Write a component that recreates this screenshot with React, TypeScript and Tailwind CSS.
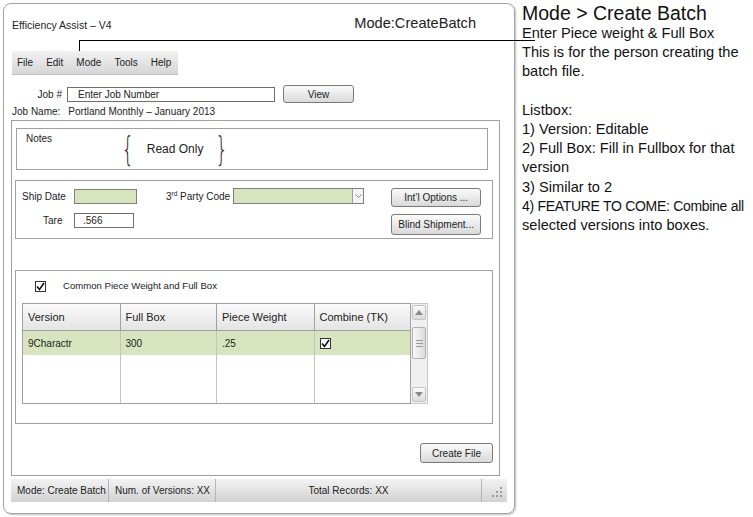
import React from "react";

const font = { fontFamily: '"Liberation Sans", Arial, sans-serif' };

const Btn = ({ label, className = "" }: { label: string; className?: string }) => (
  <div
    className={`flex items-center justify-center rounded-[3px] border border-[#7a7a7a] bg-gradient-to-b from-[#fbfbfb] to-[#d9d9d9] text-[10px] text-[#222] ${className}`}
  >
    {label}
  </div>
);

const Check = () => (
  <div className="flex h-[11px] w-[11px] items-center justify-center border border-[#333] bg-white">
    <svg width="9" height="9" viewBox="0 0 9 9">
      <path d="M1 4.5 L3.5 7.5 L8 1" fill="none" stroke="#111" strokeWidth="1.6" />
    </svg>
  </div>
);

const cols = [
  { name: "Version", w: "w-[98px]" },
  { name: "Full Box", w: "w-[97px]" },
  { name: "Piece Weight", w: "w-[98px]" },
  { name: "Combine (TK)", w: "w-[96px]" },
];

const Brace = ({ ch }: { ch: string }) => (
  <span
    className="inline-block scale-x-[0.6] text-[34px] font-extralight leading-none text-[#333]"
    style={{ fontFamily: '"DejaVu Sans", sans-serif' }}
  >
    {ch}
  </span>
);

const App = () => {
  return (
    <div className="relative h-[517px] w-[753px] overflow-hidden bg-white text-[#222]" style={font}>
      {/* annotation line */}
      <div className="absolute left-[79px] top-[40px] h-[11px] w-px bg-black" />
      <div className="absolute left-[79px] top-[40px] h-px w-[456px] bg-black" />

      <div className="flex">
        {/* window */}
        <div className="ml-[3px] mt-[3px] flex h-[511px] w-[512px] shrink-0 flex-col rounded-[8px] border border-[#a3a3a3] shadow-[1px_1px_2px_rgba(0,0,0,0.25)]">
          <div className="mt-[14px] flex h-[16px] items-center justify-between pl-[8px] pr-[38px]">
            <span className="text-[10.5px]">Efficiency Assist – V4</span>
            <span className="mt-[-4px] text-[14.6px]">Mode:CreateBatch</span>
          </div>

          {/* menu */}
          <div className="ml-[8px] mt-[17px] flex h-[24px] w-[166px] items-center gap-[12px] border-b border-[#bdbdbd] bg-gradient-to-b from-[#f2f2f2] to-[#d6d6d6] pl-[5px] text-[10px]">
            <span>File</span>
            <span className="ml-[1px]">Edit</span>
            <span className="ml-[1px]">Mode</span>
            <span className="ml-[1px]">Tools</span>
            <span className="ml-[1px]">Help</span>
          </div>

          {/* job # */}
          <div className="mt-[10px] flex h-[18px] items-center text-[10px]">
            <span className="w-[58px] text-right">Job #</span>
            <div className="ml-[5px] flex h-[15px] w-[208px] items-center border border-[#6f6f6f] pl-[10px]">
              Enter Job Number
            </div>
            <Btn label="View" className="ml-[8px] h-[18px] w-[71px]" />
          </div>
          <div className="ml-[8px] mt-[1px] flex h-[14px] items-center text-[10px]">
            <span>Job Name:</span>
            <span className="ml-[8px]">Portland Monthly – January 2013</span>
          </div>

          {/* main panel */}
          <div className="ml-[7px] mt-[2px] flex h-[356px] w-[489px] flex-col border border-[#a0a0a0] text-[10px]">
            {/* notes */}
            <div className="ml-[4px] mt-[7px] flex h-[42px] w-[472px] border border-[#a0a0a0]">
              <span className="ml-[9px] mt-[2px]">Notes</span>
              <div className="ml-[65px] flex items-center">
                <Brace ch="{" />
                <span className="ml-[8px] text-[12px]">Read Only</span>
                <span className="ml-[8px]">
                  <Brace ch="}" />
                </span>
              </div>
            </div>

            {/* ship group */}
            <div className="ml-[3px] mt-[10px] flex h-[59px] w-[478px] border border-[#a0a0a0]">
              <div className="mt-[7px] flex flex-col gap-[8px]">
                <div className="flex h-[16px] items-center">
                  <span className="ml-[6px] w-[52px]">Ship Date</span>
                  <div className="h-[15px] w-[63px] border border-[#7f7f7f] bg-[#d7e4bd]" />
                </div>
                <div className="flex h-[16px] items-center">
                  <span className="ml-[27px] w-[31px]">Tare</span>
                  <div className="flex h-[15px] w-[60px] items-center border border-[#6f6f6f] pl-[8px]">.566</div>
                </div>
              </div>
              <div className="ml-[29px] mt-[7px] flex h-[16px] items-center">
                <span>
                  3<sup className="text-[6.5px]">rd</sup> Party Code
                </span>
                <div className="ml-[3px] flex h-[16px] w-[131px] border border-[#7f7f7f] bg-[#d7e4bd]">
                  <div className="ml-auto flex w-[11px] items-center justify-center border-l border-[#a0a0a0] bg-[#f4f4f4]">
                    <svg width="7" height="4" viewBox="0 0 7 4">
                      <path d="M0.5 0.5 L3.5 3.5 L6.5 0.5" fill="none" stroke="#888" />
                    </svg>
                  </div>
                </div>
              </div>
              <div className="ml-[27px] mt-[7px] flex flex-col gap-[7px]">
                <Btn label="Int’l Options ..." className="h-[19px] w-[90px]" />
                <Btn label="Blind Shipment..." className="h-[21px] w-[90px]" />
              </div>
            </div>

            {/* table group */}
            <div className="ml-[3px] mt-[31px] flex h-[154px] w-[478px] flex-col border border-[#a0a0a0]">
              <div className="ml-[19px] mt-[9px] flex h-[12px] items-center">
                <Check />
                <span className="ml-[17px] text-[9.6px]">Common Piece Weight and Full Box</span>
              </div>
              <div className="ml-[6px] mt-[11px] flex">
                <div className="flex h-[101px] w-[389px] flex-col border border-[#a0a0a0]">
                  <div className="flex h-[27px] border-b border-[#a0a0a0] bg-gradient-to-b from-[#fafafa] to-[#e4e4e4] text-[11px]">
                    {cols.map((c, i) => (
                      <div
                        key={c.name}
                        className={`flex items-center pl-[5px] ${c.w} ${i < 3 ? "border-r border-[#a0a0a0]" : ""}`}
                      >
                        {c.name}
                      </div>
                    ))}
                  </div>
                  <div className="flex h-[24px] bg-[#d7e4bd]">
                    {["9Charactr", "300", ".25", ""].map((v, i) => (
                      <div
                        key={i}
                        className={`flex items-center pl-[5px] ${cols[i].w} ${i < 3 ? "border-r border-[#c4c4c4]" : ""}`}
                      >
                        {i === 3 ? <Check /> : v}
                      </div>
                    ))}
                  </div>
                  <div className="flex flex-1">
                    {cols.map((c, i) => (
                      <div key={c.name} className={`${c.w} ${i < 3 ? "border-r border-[#c4c4c4]" : ""}`} />
                    ))}
                  </div>
                </div>
                <div className="flex h-[101px] w-[17px] flex-col border-y border-r border-[#c8c8c8] bg-[#f0f0f0] p-[1px]">
                  <div className="flex h-[15px] items-center justify-center rounded-[2px] border border-[#c4c4c4] bg-gradient-to-b from-[#fafafa] to-[#dcdcdc]">
                    <svg width="8" height="5" viewBox="0 0 8 5">
                      <path d="M0 5 L4 0 L8 5 Z" fill="#8a8a8a" />
                    </svg>
                  </div>
                  <div className="mt-[7px] flex h-[32px] flex-col items-center justify-center gap-[2px] rounded-[2px] border border-[#b0b0b0] bg-gradient-to-r from-[#f8f8f8] to-[#dcdcdc]">
                    <div className="h-px w-[7px] bg-[#9a9a9a]" />
                    <div className="h-px w-[7px] bg-[#9a9a9a]" />
                    <div className="h-px w-[7px] bg-[#9a9a9a]" />
                  </div>
                  <div className="mt-auto flex h-[15px] items-center justify-center rounded-[2px] border border-[#c4c4c4] bg-gradient-to-b from-[#fafafa] to-[#dcdcdc]">
                    <svg width="8" height="5" viewBox="0 0 8 5">
                      <path d="M0 0 L4 5 L8 0 Z" fill="#8a8a8a" />
                    </svg>
                  </div>
                </div>
              </div>
            </div>

            <div className="mr-[6px] mt-[19px] flex justify-end">
              <Btn label="Create File" className="h-[20px] w-[73px]" />
            </div>
          </div>

          {/* status bar */}
          <div className="ml-[7px] mt-[3px] flex h-[23px] w-[496px] bg-gradient-to-b from-[#f3f3f3] to-[#d2d2d2] text-[10px]">
            <div className="flex w-[98px] items-center border-r border-[#b5b5b5] pl-[6px]">Mode: Create Batch</div>
            <div className="flex w-[107px] items-center border-r border-[#b5b5b5] pl-[6px]">Num. of Versions: XX</div>
            <div className="flex flex-1 items-center justify-center border-r border-[#b5b5b5]">Total Records: XX</div>
            <div className="flex w-[25px] items-end justify-end pb-[4px] pr-[4px]">
              <svg width="12" height="12" viewBox="0 0 12 12">
                {[
                  [10, 2],
                  [10, 6],
                  [6, 6],
                  [10, 10],
                  [6, 10],
                  [2, 10],
                ].map(([x, y], i) => (
                  <rect key={i} x={x - 1} y={y - 1} width="2" height="2" fill="#9a9a9a" />
                ))}
              </svg>
            </div>
          </div>
        </div>

        {/* annotation text */}
        <div className="ml-[7px] mt-[3px] flex shrink-0 flex-col whitespace-nowrap text-[#111]">
          <div className="text-[19.5px] leading-[21px]">Mode &gt; Create Batch</div>
          <div className="text-[14.6px] leading-[19.2px]">
            <div>Enter Piece weight &amp; Full Box</div>
            <div>This is for the person creating the</div>
            <div>batch file.</div>
            <div className="h-[19.2px]" />
            <div>Listbox:</div>
            <div>1) Version: Editable</div>
            <div>2) Full Box: Fill in Fullbox for that</div>
            <div>version</div>
            <div>3) Similar to 2</div>
            <div className="text-[14px] tracking-[-0.3px]">4) FEATURE TO COME: Combine all</div>
            <div>selected versions into boxes.</div>
          </div>
        </div>
      </div>
    </div>
  );
};

export default App;
